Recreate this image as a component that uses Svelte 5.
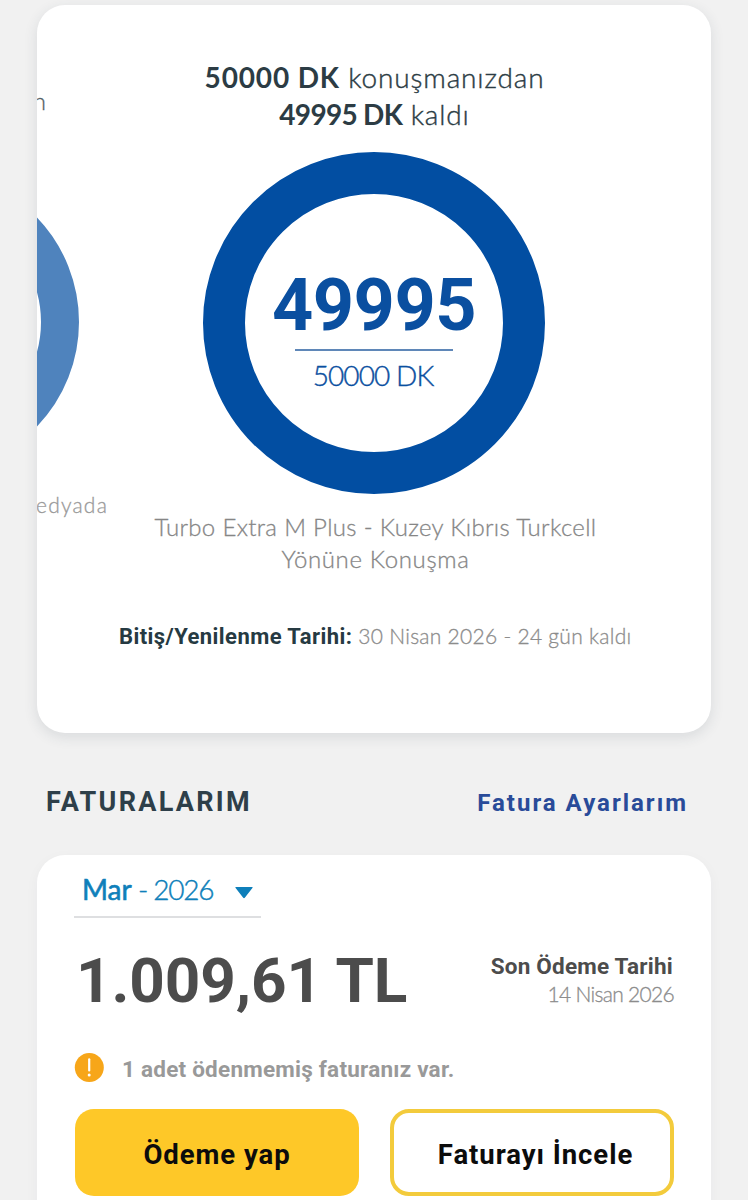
<script lang="ts">
	interface Usage {
		total: number;
		left: number;
		unit: string;
		name: string[];
		renewal: string;
	}

	const usage: Usage = {
		total: 50000,
		left: 49995,
		unit: 'DK',
		name: ['Turbo Extra M Plus - Kuzey Kıbrıs Turkcell', 'Yönüne Konuşma'],
		renewal: '30 Nisan 2026 - 24 gün kaldı'
	};

	const bill = {
		month: 'Mar',
		year: '2026',
		amount: '1.009,61 TL',
		due: '14 Nisan 2026',
		unpaid: 1
	};
</script>

<main class="page">
	<section class="card usage">
		<div class="carousel">
			<div class="peek">
				<span class="peek-title">n</span>
				<div class="peek-ring"></div>
				<span class="peek-name">edyada</span>
			</div>
			<div class="slide">
				<h2 class="title">
					<span><b>{usage.total} {usage.unit}</b> konuşmanızdan</span>
					<span class="remaining"><b>{usage.left} {usage.unit}</b> kaldı</span>
				</h2>
				<div class="ring">
					<strong>{usage.left}</strong>
					<span class="total">{usage.total} {usage.unit}</span>
				</div>
				<p class="name">
					{#each usage.name as line (line)}
						<span>{line}</span>
					{/each}
				</p>
			</div>
		</div>
		<p class="renewal"><b>Bitiş/Yenilenme Tarihi:</b> <span>{usage.renewal}</span></p>
	</section>

	<header class="heading">
		<h3>FATURALARIM</h3>
		<a href="#ayarlar">Fatura Ayarlarım</a>
	</header>

	<section class="card bill">
		<button class="month">
			<span><b>{bill.month}</b> - {bill.year}</span>
			<svg width="18" height="12" viewBox="0 0 18 12">
				<path d="M1 0h16q1.2 0 .4 1L9.8 10.8q-.8.9-1.6 0L.6 1Q-.2 0 1 0z" fill="#0e7fba" />
			</svg>
		</button>
		<div class="summary">
			<strong class="amount">{bill.amount}</strong>
			<div class="due">
				<b>Son Ödeme Tarihi</b>
				<span>{bill.due}</span>
			</div>
		</div>
		<div class="warning">
			<svg width="30" height="30" viewBox="0 0 30 30">
				<circle cx="15.3" cy="14.6" r="14.5" fill="#f7a619" />
				<path d="M15.2 6.3v11.2" stroke="#fff" stroke-width="2.2" stroke-linecap="round" />
				<circle cx="15.2" cy="22" r="1.5" fill="#fff" />
			</svg>
			<span>{bill.unpaid} adet ödenmemiş faturanız var.</span>
		</div>
		<div class="actions">
			<button class="btn primary">Ödeme yap</button>
			<button class="btn outline">Faturayı İncele</button>
		</div>
	</section>
</main>

<style>
	:global(body) {
		margin: 0;
		background: #f1f1f1;
	}

	.page {
		box-sizing: border-box;
		width: 748px;
		height: 1200px;
		padding: 5px 37px 0;
		overflow: hidden;
		font-family: Roboto, sans-serif;
		background: #f1f1f1;
	}

	h2,
	h3,
	p {
		margin: 0;
		font-weight: inherit;
	}

	button {
		padding: 0;
		border: 0;
		background: none;
		font-family: inherit;
	}

	.card {
		border-radius: 28px;
		background: #fff;
	}

	.usage {
		height: 728px;
		overflow: hidden;
		box-shadow: 0 4px 14px rgba(40, 60, 75, 0.12);
	}

	.carousel {
		display: flex;
		gap: 43px;
		height: 615px;
	}

	.peek {
		display: flex;
		flex-direction: column;
		align-items: flex-end;
		flex: none;
		width: 71px;
		font-family: Lato, sans-serif;
		font-weight: 300;
		color: #999;
		-webkit-text-stroke: 0.3px;
	}

	.peek-title {
		margin: 80px 62px 0 0;
		font-size: 24px;
		line-height: 32px;
		color: #555f66;
	}

	.peek-ring {
		flex: none;
		box-sizing: border-box;
		width: 302px;
		height: 302px;
		margin: 54px 29px 0 0;
		border: 38px solid #4f83bd;
		border-radius: 50%;
	}

	.peek-name {
		margin-top: 18px;
		font-size: 21px;
		line-height: 28px;
		letter-spacing: 1.2px;
	}

	.slide {
		display: flex;
		flex-direction: column;
		align-items: center;
		flex: none;
		width: 446px;
		padding-top: 54px;
		font-family: Lato, sans-serif;
		font-weight: 300;
		text-align: center;
	}

	.title {
		font-size: 28px;
		line-height: 36.5px;
		letter-spacing: 0.85px;
		color: #2c3c44;
		-webkit-text-stroke: 0.4px;
	}

	.title span {
		display: block;
		padding-left: 1px;
		white-space: nowrap;
	}

	.title b {
		font-weight: 700;
		-webkit-text-stroke: 0;
	}

	.remaining b {
		letter-spacing: -0.7px;
	}

	.ring {
		display: flex;
		flex-direction: column;
		align-items: center;
		box-sizing: border-box;
		width: 342px;
		height: 342px;
		margin-top: 20px;
		border: 42px solid #024ea2;
		border-radius: 50%;
		color: #0a4fa0;
	}

	.ring strong {
		margin-top: 68px;
		font-family: Roboto, sans-serif;
		font-size: 72px;
		font-weight: 700;
		line-height: 87px;
		letter-spacing: -0.5px;
	}

	.total {
		box-sizing: border-box;
		width: 158px;
		padding-right: 2px;
		border-top: 2px solid #5f87b8;
		font-size: 28px;
		line-height: 49px;
		letter-spacing: -0.9px;
		-webkit-text-stroke: 0.4px;
	}

	.name {
		margin-top: 17px;
		padding-left: 3px;
		font-size: 24px;
		line-height: 31.5px;
		letter-spacing: 0.33px;
		color: #868686;
		-webkit-text-stroke: 0.3px;
	}

	.name span {
		display: block;
		white-space: nowrap;
	}

	.name span:last-child {
		letter-spacing: 0.65px;
	}

	.renewal {
		display: flex;
		align-items: baseline;
		gap: 6px;
		margin-left: 82px;
		font-size: 22px;
		line-height: 32px;
		letter-spacing: 0.43px;
		white-space: nowrap;
		color: #263a42;
	}

	.renewal span {
		font-family: Lato, sans-serif;
		font-size: 21px;
		font-weight: 300;
		letter-spacing: 0.28px;
		color: #8c8c8c;
		-webkit-text-stroke: 0.3px;
	}

	.heading {
		display: flex;
		align-items: baseline;
		justify-content: space-between;
		box-sizing: border-box;
		height: 122px;
		padding: 53px 23px 0 9px;
		font-weight: 700;
		line-height: 32px;
	}

	.heading h3 {
		font-size: 27px;
		letter-spacing: 2.3px;
		color: #2e3f49;
	}

	.heading a {
		font-size: 24px;
		letter-spacing: 2px;
		color: #294b99;
		text-decoration: none;
	}

	.bill {
		height: 400px;
		padding: 0 37px;
		box-shadow: 0 4px 14px rgba(40, 60, 75, 0.04);
	}

	.month {
		display: flex;
		align-items: center;
		justify-content: space-between;
		box-sizing: border-box;
		width: 187px;
		height: 63px;
		padding: 6px 8px 0;
		border-bottom: 2px solid #dedfe1;
		font-family: Lato, sans-serif;
		font-size: 28px;
		font-weight: 300;
		letter-spacing: -1.3px;
		white-space: nowrap;
		color: #0e7fba;
		-webkit-text-stroke: 0.4px;
	}

	.month b {
		font-weight: 400;
		letter-spacing: 0;
		-webkit-text-stroke: 0.6px;
	}

	.month svg {
		flex: none;
		margin-top: 9px;
	}

	.summary {
		display: flex;
		justify-content: space-between;
		height: 133px;
	}

	.amount {
		margin: 27px 0 0 2px;
		font-size: 62px;
		font-weight: 700;
		line-height: 72px;
		letter-spacing: -0.1px;
		color: #4c4c4c;
	}

	.due {
		display: flex;
		flex-direction: column;
		align-items: flex-end;
		padding-top: 34px;
		font-size: 22.5px;
		line-height: 28px;
		letter-spacing: 0.22px;
		color: #4c4c4c;
	}

	.due b {
		margin-right: 1px;
	}

	.due span {
		font-family: Lato, sans-serif;
		font-size: 21px;
		font-weight: 300;
		letter-spacing: -0.7px;
		color: #8c8c8c;
		-webkit-text-stroke: 0.3px;
	}

	.warning {
		display: flex;
		align-items: center;
		gap: 18px;
		height: 34px;
		font-size: 22.5px;
		font-weight: 700;
		letter-spacing: 0.23px;
		color: #999;
	}

	.warning span {
		padding-top: 2px;
	}

	.actions {
		display: flex;
		gap: 31px;
		margin: 24px 0 0 1px;
	}

	.btn {
		box-sizing: border-box;
		width: 284px;
		height: 87px;
		padding-top: 4px;
		border-radius: 19px;
		font-size: 27.5px;
		font-weight: 700;
		letter-spacing: 0.95px;
		color: #0c0c0c;
	}

	.primary {
		background: #fec828;
	}

	.outline {
		padding-left: 7px;
		border: 4px solid #f3cb3c;
	}
</style>
